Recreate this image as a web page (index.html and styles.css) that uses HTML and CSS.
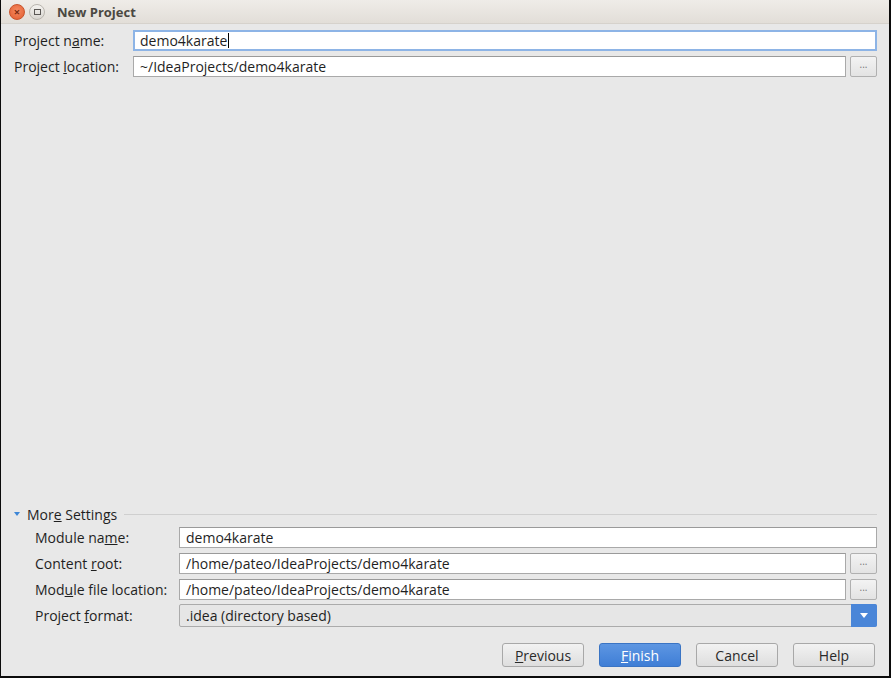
FILE: index.html
```html
<!DOCTYPE html>
<html lang="en">
<head>
    <meta charset="UTF-8">
    <title>New Project</title>
    <link rel="stylesheet" href="styles.css">
</head>
<body>
    <div id="dlg">
        <div id="titleBar">
            <span class="winBtn closeBtn">&#215;</span>
            <span class="winBtn maxBtn"><i></i></span>
            <span id="titleText">New Project</span>
        </div>

        <div id="topForm">
            <div class="row">
                <label class="lbl lblTop">Project n<u>a</u>me:</label>
                <div class="field focused">demo4karate<span class="caret"></span></div>
            </div>
            <div class="row">
                <label class="lbl lblTop">Project <u>l</u>ocation:</label>
                <div class="field">~/IdeaProjects/demo4karate</div>
                <button class="browse">...</button>
            </div>
        </div>

        <div id="moreSec">
            <div id="moreHead">
                <span class="tri"></span>
                <span>Mor<u>e</u> Settings</span>
                <span class="sepLine"></span>
            </div>
            <div class="row">
                <label class="lbl lblSub">Module na<u>m</u>e:</label>
                <div class="field">demo4karate</div>
            </div>
            <div class="row">
                <label class="lbl lblSub">Content <u>r</u>oot:</label>
                <div class="field">/home/pateo/IdeaProjects/demo4karate</div>
                <button class="browse">...</button>
            </div>
            <div class="row">
                <label class="lbl lblSub">Mod<u>u</u>le file location:</label>
                <div class="field">/home/pateo/IdeaProjects/demo4karate</div>
                <button class="browse">...</button>
            </div>
            <div class="row">
                <label class="lbl lblSub">Project <u>f</u>ormat:</label>
                <div class="field combo">.idea (directory based)<span class="comboArrow"><span class="tri white"></span></span></div>
            </div>
        </div>

        <div id="btnBar">
            <button class="dbtn"><u>P</u>revious</button>
            <button class="dbtn primary"><u>F</u>inish</button>
            <button class="dbtn">Cancel</button>
            <button class="dbtn">Help</button>
        </div>
    </div>
</body>
</html>
```

FILE: styles.css
```css
*{
    box-sizing: border-box;
}

html, body{
    margin: 0;
    padding: 0;
    background: #0b0b0b;
}

body{
    font-family: "Open Sans", "DejaVu Sans", sans-serif;
    font-size: 14px;
    color: #1f1f1f;
}

#dlg{
    width: 888px;
    height: 676px;
    margin-left: 1px;
    background-color: #e8e8e8;
    display: flex;
    flex-direction: column;
}

#titleBar{
    height: 24px;
    background: linear-gradient(#efece8, #e2ded8);
    display: flex;
    align-items: center;
    padding-left: 8px;
    border-bottom: 1px solid #d6d2cc;
}

.winBtn{
    width: 16px;
    height: 16px;
    border-radius: 50%;
    display: inline-flex;
    align-items: center;
    justify-content: center;
    margin-right: 4px;
}

.closeBtn{
    background: radial-gradient(circle at 50% 40%, #f58a62, #e25c2e);
    border: 1px solid #c9532b;
    color: #7a2a10;
    font-size: 11px;
    font-weight: bold;
    line-height: 1;
}

.maxBtn{
    background: linear-gradient(#f4f2ef, #d9d6d1);
    border: 1px solid #b9b5ae;
}

.maxBtn i{
    width: 7px;
    height: 6px;
    border: 1px solid #5a5754;
}

#titleText{
    margin-left: 8px;
    font-weight: bold;
    color: #4b4842;
    font-size: 13px;
}

#topForm{
    padding: 3px 12px 0 13px;
    flex: 1;
}

.row{
    display: flex;
    align-items: center;
    height: 26px;
}

#topForm .row{
    height: 26.5px;
}

.lbl{
    flex: none;
    white-space: nowrap;
}

.lblTop{
    width: 119px;
}

.lblSub{
    width: 144px;
}

.field{
    flex: 1;
    height: 21px;
    background: #fff;
    border: 1px solid #a9a9a9;
    border-top-color: #9a9a9a;
    padding-left: 6px;
    display: flex;
    align-items: center;
    white-space: nowrap;
}

.focused{
    border: 2px solid #8db4e6;
    padding-left: 5px;
}

.caret{
    display: inline-block;
    width: 1px;
    height: 15px;
    background: #000;
    margin-left: 1px;
}

.browse{
    flex: none;
    width: 27px;
    height: 21px;
    margin-left: 4px;
    background: linear-gradient(#f3f3f3, #e3e3e3);
    border: 1px solid #b0b0b0;
    border-radius: 2px;
    font-size: 10px;
    color: #777;
    padding: 0 0 6px;
    font-family: inherit;
}

#moreSec{
    padding: 0 12px 0 12px;
}

#moreHead{
    display: flex;
    align-items: center;
    height: 14px;
    margin-bottom: 3px;
}

.tri{
    width: 0;
    height: 0;
    border-left: 3.5px solid transparent;
    border-right: 3.5px solid transparent;
    border-top: 4px solid #3d86d6;
    margin: 0 7px 0 1px;
}

.tri.white{
    border-top-color: #fff;
    margin: 0;
    border-left-width: 4px;
    border-right-width: 4px;
    border-top-width: 5px;
}

.sepLine{
    flex: 1;
    height: 1px;
    background: #cfcfcf;
    margin-left: 7px;
}

#moreSec .row{
    padding-left: 22px;
    height: 26px;
}

#moreSec .row:last-child{
    height: 27px;
}

.combo{
    position: relative;
    height: 23px;
    background: #e6e6e6;
    border: 1px solid #ababab;
    border-radius: 2px;
}

.comboArrow{
    position: absolute;
    right: -1px;
    top: -1px;
    width: 26px;
    height: 23px;
    background: #4a86d8;
    border-radius: 0 2px 2px 0;
    display: flex;
    align-items: center;
    justify-content: center;
}

#btnBar{
    display: flex;
    justify-content: flex-end;
    gap: 15px;
    padding: 14px 14px 9px 0;
}

.dbtn{
    width: 82px;
    height: 24px;
    font-family: inherit;
    font-size: 14px;
    color: #2a2a2a;
    background: linear-gradient(#f2f2f2, #dedede);
    border: 1px solid #a8a8a8;
    border-radius: 3px;
}

.dbtn.primary{
    background: linear-gradient(#5d96e2, #3f7ed6);
    border-color: #3a74c4;
    color: #fff;
}
```
